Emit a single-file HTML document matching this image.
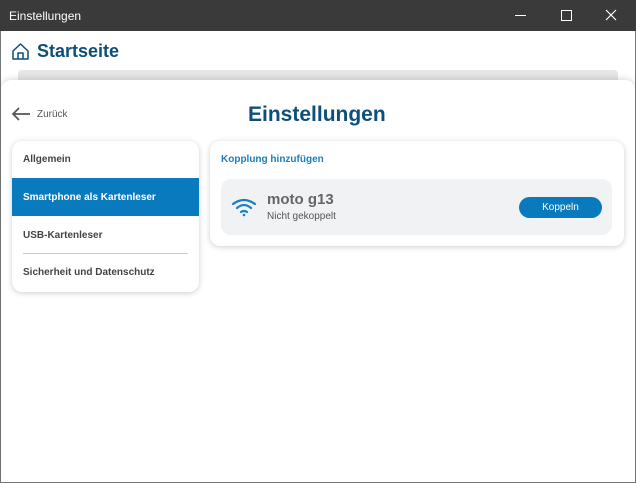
<!DOCTYPE html><html><head><style>
body{margin:0;width:636px;height:483px;overflow:hidden;font-family:"Liberation Sans",sans-serif;background:#fff;position:relative}
.tb{position:absolute;left:0;top:0;width:636px;height:31px;background:#3a3a3a;color:#fff;font-size:12px}
.frame{position:absolute;left:0;top:31px;width:634px;height:451px;border:1px solid #777;border-top:none}
.a{position:absolute}
</style></head><body>
<div class="tb"><span class="a" style="left:9px;top:9px">Einstellungen</span>
<div class="a" style="left:515px;top:15px;width:11px;height:1px;background:#fff"></div>
<div class="a" style="left:561px;top:10px;width:9px;height:9px;border:1px solid #fff"></div>
<svg class="a" style="left:605px;top:9px" width="12" height="12"><path d="M1 1L11 11M11 1L1 11" stroke="#fff" stroke-width="1.2"/></svg>
</div>
<div class="frame"></div>
<svg class="a" style="left:11px;top:42px" width="19" height="19" viewBox="0 0 19 19"><path d="M2 9L9.5 2L17 9V17H2Z M7 17V11H12V17" fill="none" stroke="#0d4f7a" stroke-width="1.5" stroke-linejoin="round"/></svg>
<div class="a" style="left:37px;top:41px;font-size:18px;font-weight:bold;color:#0d4f7a">Startseite</div>
<div class="a" style="left:18px;top:70px;width:600px;height:14px;background:#e6e6e6;border-radius:4px"></div>
<div class="a" style="left:1px;top:80px;width:634px;height:402px;background:#fff;border-radius:10px 10px 0 0;box-shadow:0 -2px 6px rgba(0,0,0,.12)"></div>
<svg class="a" style="left:11px;top:106px" width="20" height="16"><path d="M19 8H2M8 2L2 8L8 14" fill="none" stroke="#555" stroke-width="1.7"/></svg>
<div class="a" style="left:37px;top:109px;font-size:10px;color:#555">Zurück</div>
<div class="a" style="left:248px;top:103px;font-size:21px;font-weight:bold;color:#0d4f7a;letter-spacing:0">Einstellungen</div>
<div class="a" style="left:12px;top:141px;width:187px;height:151px;background:#fff;border-radius:10px;box-shadow:0 1px 6px rgba(0,0,0,.2);overflow:hidden;font-size:10px;font-weight:bold;color:#444">
<div class="a" style="left:11px;top:13px">Allgemein</div>
<div class="a" style="left:0;top:37px;width:187px;height:38px;background:#0a7abf"></div>
<div class="a" style="left:11px;top:51px;color:#fff">Smartphone als Kartenleser</div>
<div class="a" style="left:11px;top:89px">USB-Kartenleser</div>
<div class="a" style="left:11px;top:112px;width:165px;height:1px;background:#ccc"></div>
<div class="a" style="left:11px;top:126px">Sicherheit und Datenschutz</div>
</div>
<div class="a" style="left:210px;top:141px;width:414px;height:105px;background:#fff;border-radius:10px;box-shadow:0 1px 6px rgba(0,0,0,.2)">
<div class="a" style="left:11px;top:13px;font-size:10px;font-weight:bold;color:#1a7fc0">Kopplung hinzufügen</div>
<div class="a" style="left:11px;top:38px;width:391px;height:56px;background:#f1f2f4;border-radius:10px">
<svg class="a" style="left:10px;top:18px" width="26" height="20" viewBox="0 0 26 20"><g fill="none" stroke="#1a7fc0" stroke-width="2.2" stroke-linecap="round"><path d="M2 7Q13 -1 24 7"/><path d="M6 11Q13 5 20 11"/><path d="M10 15Q13 13 16 15"/></g><circle cx="13" cy="18" r="1.3" fill="#1a7fc0"/></svg>
<div class="a" style="left:46px;top:12px;font-size:15px;font-weight:bold;color:#666">moto g13</div>
<div class="a" style="left:46px;top:32px;font-size:10px;color:#555">Nicht gekoppelt</div>
<div class="a" style="left:298px;top:18px;width:83px;height:21px;background:#0a7abf;border-radius:11px;color:#fff;font-size:10px;text-align:center;line-height:21px">Koppeln</div>
</div></div>
</body></html>
